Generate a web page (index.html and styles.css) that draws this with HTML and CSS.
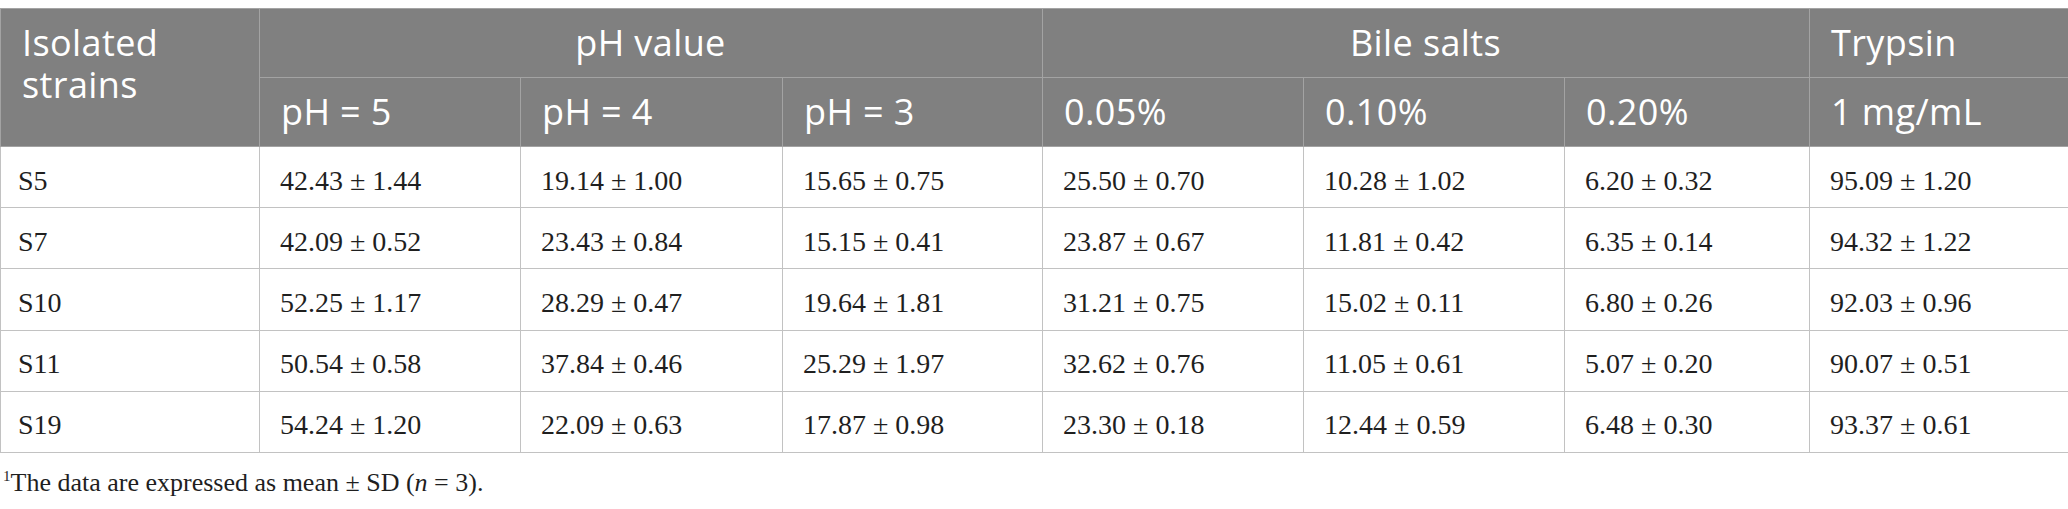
FILE: index.html
```html
<!DOCTYPE html>
<html lang="en">
<head>
<meta charset="utf-8">
<title>Isolated strains tolerance</title>
<link rel="stylesheet" href="styles.css">
</head>
<body>
<table class="data-table">
  <colgroup>
    <col class="col-strain"><col class="col-mid"><col class="col-mid2"><col class="col-mid3">
    <col class="col-mid"><col class="col-mid"><col class="col-narrow"><col class="col-strain">
  </colgroup>
  <thead>
    <tr class="head-row">
      <th class="head-cell head-stack" rowspan="2"><span class="stack-line">Isolated</span><span class="stack-line">strains</span></th>
      <th class="head-cell head-center" colspan="3">pH value</th>
      <th class="head-cell head-center" colspan="3">Bile salts</th>
      <th class="head-cell">Trypsin</th>
    </tr>
    <tr class="head-row">
      <th class="head-cell">pH = 5</th>
      <th class="head-cell">pH = 4</th>
      <th class="head-cell">pH = 3</th>
      <th class="head-cell">0.05%</th>
      <th class="head-cell">0.10%</th>
      <th class="head-cell">0.20%</th>
      <th class="head-cell">1 mg/mL</th>
    </tr>
  </thead>
  <tbody>
    <tr class="body-row">
      <td class="body-cell strain-cell">S5</td>
      <td class="body-cell">42.43 ± 1.44</td>
      <td class="body-cell">19.14 ± 1.00</td>
      <td class="body-cell">15.65 ± 0.75</td>
      <td class="body-cell">25.50 ± 0.70</td>
      <td class="body-cell">10.28 ± 1.02</td>
      <td class="body-cell">6.20 ± 0.32</td>
      <td class="body-cell">95.09 ± 1.20</td>
    </tr>
    <tr class="body-row">
      <td class="body-cell strain-cell">S7</td>
      <td class="body-cell">42.09 ± 0.52</td>
      <td class="body-cell">23.43 ± 0.84</td>
      <td class="body-cell">15.15 ± 0.41</td>
      <td class="body-cell">23.87 ± 0.67</td>
      <td class="body-cell">11.81 ± 0.42</td>
      <td class="body-cell">6.35 ± 0.14</td>
      <td class="body-cell">94.32 ± 1.22</td>
    </tr>
    <tr class="body-row">
      <td class="body-cell strain-cell">S10</td>
      <td class="body-cell">52.25 ± 1.17</td>
      <td class="body-cell">28.29 ± 0.47</td>
      <td class="body-cell">19.64 ± 1.81</td>
      <td class="body-cell">31.21 ± 0.75</td>
      <td class="body-cell">15.02 ± 0.11</td>
      <td class="body-cell">6.80 ± 0.26</td>
      <td class="body-cell">92.03 ± 0.96</td>
    </tr>
    <tr class="body-row">
      <td class="body-cell strain-cell">S11</td>
      <td class="body-cell">50.54 ± 0.58</td>
      <td class="body-cell">37.84 ± 0.46</td>
      <td class="body-cell">25.29 ± 1.97</td>
      <td class="body-cell">32.62 ± 0.76</td>
      <td class="body-cell">11.05 ± 0.61</td>
      <td class="body-cell">5.07 ± 0.20</td>
      <td class="body-cell">90.07 ± 0.51</td>
    </tr>
    <tr class="body-row">
      <td class="body-cell strain-cell">S19</td>
      <td class="body-cell">54.24 ± 1.20</td>
      <td class="body-cell">22.09 ± 0.63</td>
      <td class="body-cell">17.87 ± 0.98</td>
      <td class="body-cell">23.30 ± 0.18</td>
      <td class="body-cell">12.44 ± 0.59</td>
      <td class="body-cell">6.48 ± 0.30</td>
      <td class="body-cell">93.37 ± 0.61</td>
    </tr>
  </tbody>
</table>
<p class="footnote"><sup class="fn-mark">1</sup>The data are expressed as mean ± SD (<i>n</i> = 3).</p>
</body>
</html>
```
FILE: styles.css
```css
html, body {
  margin: 0;
  padding: 0;
  background: #ffffff;
}

body {
  padding-top: 8px;
}

.data-table {
  width: 2068px;
  table-layout: fixed;
  border-collapse: collapse;
  border: 1px solid #c2c2c2;
}

.col-strain { width: 259px; }
.col-mid { width: 261px; }
.col-mid2 { width: 262px; }
.col-mid3 { width: 260px; }
.col-narrow { width: 245px; }

.head-cell {
  background: #808080;
  color: #ffffff;
  font-family: "Open Sans", "Noto Sans", sans-serif;
  font-weight: 400;
  font-size: 36px;
  letter-spacing: 0.4px;
  line-height: 42px;
  text-align: left;
  vertical-align: middle;
  padding: 13px 22px 13px 21px;
  border: 1px solid #a3a3a3;
  white-space: nowrap;
}

.head-center {
  text-align: center;
}

.head-stack {
  vertical-align: top;
}

.stack-line {
  display: block;
}

.body-cell {
  font-family: "Liberation Serif", "Times New Roman", serif;
  font-size: 28px;
  line-height: 30px;
  color: #1f1f1f;
  padding: 18.6px 22px 11.6px 20px;
  border: 1px solid #c2c2c2;
  vertical-align: middle;
  white-space: nowrap;
}

.strain-cell {
  padding-left: 17px;
}

.footnote {
  margin: 15px 0 0 3px;
  font-family: "Liberation Serif", "Times New Roman", serif;
  font-size: 26px;
  color: #1f1f1f;
}

.fn-mark {
  font-size: 15px;
  vertical-align: 10px;
  line-height: 0;
}
```
